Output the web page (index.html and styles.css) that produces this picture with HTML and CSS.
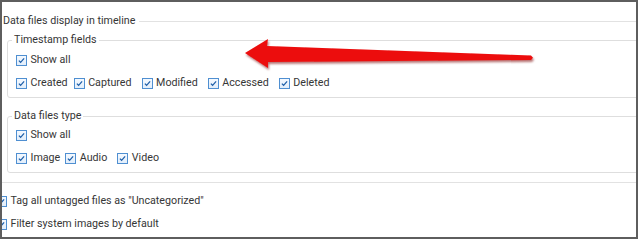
FILE: index.html
```html
<!DOCTYPE html>
<html lang="en">
<head>
    <meta charset="UTF-8">
    <title>Timeline settings</title>
    <link rel="stylesheet" href="styles.css">
</head>
<body>
    <div class="frame">
        <!-- Outer group -->
        <div class="group-head"><span>Data files display in timeline</span></div>

        <fieldset class="box box-first">
            <legend>Timestamp fields</legend>
            <div class="row row-top">
                <label class="check"><span class="cb"><svg viewBox="0 0 11 11"><path d="M2.3 5.6 L4.4 7.7 L8.7 2.9"/></svg></span>Show all</label>
            </div>
            <div class="row">
                <label class="check gap-s"><span class="cb"><svg viewBox="0 0 11 11"><path d="M2.3 5.6 L4.4 7.7 L8.7 2.9"/></svg></span>Created</label>
                <label class="check"><span class="cb"><svg viewBox="0 0 11 11"><path d="M2.3 5.6 L4.4 7.7 L8.7 2.9"/></svg></span>Captured</label>
                <label class="check"><span class="cb"><svg viewBox="0 0 11 11"><path d="M2.3 5.6 L4.4 7.7 L8.7 2.9"/></svg></span>Modified</label>
                <label class="check"><span class="cb"><svg viewBox="0 0 11 11"><path d="M2.3 5.6 L4.4 7.7 L8.7 2.9"/></svg></span>Accessed</label>
                <label class="check"><span class="cb"><svg viewBox="0 0 11 11"><path d="M2.3 5.6 L4.4 7.7 L8.7 2.9"/></svg></span>Deleted</label>
            </div>
        </fieldset>

        <fieldset class="box box-second">
            <legend>Data files type</legend>
            <div class="row row-top2">
                <label class="check"><span class="cb"><svg viewBox="0 0 11 11"><path d="M2.3 5.6 L4.4 7.7 L8.7 2.9"/></svg></span>Show all</label>
            </div>
            <div class="row">
                <label class="check gap-xs"><span class="cb"><svg viewBox="0 0 11 11"><path d="M2.3 5.6 L4.4 7.7 L8.7 2.9"/></svg></span>Image</label>
                <label class="check"><span class="cb"><svg viewBox="0 0 11 11"><path d="M2.3 5.6 L4.4 7.7 L8.7 2.9"/></svg></span>Audio</label>
                <label class="check"><span class="cb"><svg viewBox="0 0 11 11"><path d="M2.3 5.6 L4.4 7.7 L8.7 2.9"/></svg></span>Video</label>
            </div>
        </fieldset>

        <div class="group-foot"></div>

        <div class="row row-out row-out-first">
            <label class="check"><span class="cb"><svg viewBox="0 0 11 11"><path d="M2.3 5.6 L4.4 7.7 L8.7 2.9"/></svg></span>Tag all untagged files as "Uncategorized"</label>
        </div>
        <div class="row row-out">
            <label class="check"><span class="cb"><svg viewBox="0 0 11 11"><path d="M2.3 5.6 L4.4 7.7 L8.7 2.9"/></svg></span>Filter system images by default</label>
        </div>
    </div>

    <!-- Annotation arrow over the screenshot -->
    <svg class="arrow" viewBox="0 0 640 240" width="640" height="240">
        <defs>
            <filter id="shade" x="-10%" y="-50%" width="120%" height="200%">
                <feDropShadow dx="1" dy="2" stdDeviation="1.2" flood-color="#7a0000" flood-opacity="0.55"/>
            </filter>
        </defs>
        <polygon filter="url(#shade)" fill="#ec0b0b"
                 points="245,53 268,39 267,46 531,55.5 533,57.8 531,60 268,62 268,68"/>
    </svg>
</body>
</html>
```

FILE: styles.css
```css
body {
    margin: 0;
    width: 640px;
    height: 240px;
    position: relative;
    background: #fff;
    font-family: Roboto, 'Noto Sans', Arial, sans-serif;
    font-size: 10.7px;
    line-height: 16px;
    color: #363636;
}
.frame {
    box-sizing: border-box;
    width: 638px;
    height: 239px;
    border: 2px solid #5e5e5e;
    overflow: hidden;
    background: #fff;
}
.group-head {
    display: flex;
    align-items: center;
    height: 16px;
    margin-top: 11px;
    padding-left: 1px;
}
.group-head::after {
    content: "";
    flex: 1;
    border-top: 1px solid #e2e2e2;
    margin-left: 4px;
    margin-right: -10px;
}
.box {
    margin: 0 -12px 0 5px;
    padding: 0 0 6px 8px;
    border: 1px solid #dedede;
    border-radius: 3px;
    min-width: 0;
}
.box legend {
    padding: 0 2px;
    margin-left: -4px;
    line-height: 16px;
}
.box-first {
    margin-top: 3px;
}
.box-second {
    margin-top: 10px;
}
.row {
    display: flex;
    align-items: center;
    height: 16px;
    margin-top: 7px;
    gap: 10px;
}
.row-top {
    margin-top: 4px;
}
.row-top2 {
    margin-top: 3px;
}
.check {
    display: inline-flex;
    align-items: center;
    gap: 3.5px;
    white-space: nowrap;
}
.gap-s {
    margin-right: -4px;
}
.gap-xs {
    margin-right: -5px;
}
.cb {
    box-sizing: border-box;
    width: 11px;
    height: 11px;
    border: 1px solid #4f8fd1;
    background: linear-gradient(#f4f9ff, #e2eefb);
    display: inline-block;
    flex: none;
}
.cb svg {
    display: block;
    width: 9px;
    height: 9px;
}
.cb path {
    fill: none;
    stroke: #1d5ea8;
    stroke-width: 1.5;
}
.group-foot {
    border-top: 1px solid #e2e2e2;
    margin-top: 9px;
}
.row-out {
    margin-left: -6px;
}
.row-out-first {
    margin-top: 10px;
}
.arrow {
    position: absolute;
    left: 0;
    top: 0;
    pointer-events: none;
}
```
